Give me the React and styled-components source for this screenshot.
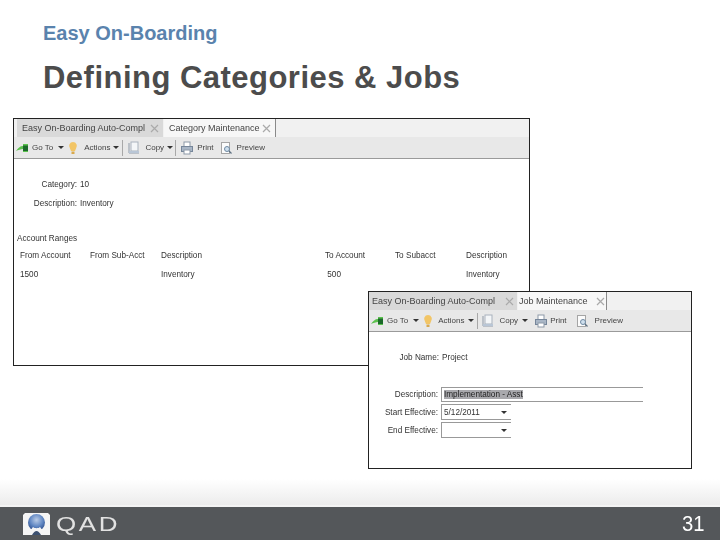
import React from 'react';
import styled, { createGlobalStyle, css } from 'styled-components';

const GlobalStyle = createGlobalStyle`
  html, body {
    margin: 0;
    padding: 0;
    background: #fff;
    font-family: "Liberation Sans", Arial, sans-serif;
  }
`;

const soft = css`
  filter: blur(0.3px);
`;

const Page = styled.div`
  width: 720px;
  height: 540px;
  display: flex;
  flex-direction: column;
  overflow: hidden;
`;

const Header = styled.header`
  padding: 21px 0 0 43px;
  height: 97px;
  box-sizing: border-box;
`;

const Kicker = styled.div`
  font-size: 20px;
  line-height: 24px;
  font-weight: 700;
  color: #5a83ad;
`;

const Title = styled.h1`
  margin: 15px 0 0;
  font-size: 31px;
  line-height: 36px;
  font-weight: 700;
  color: #4c4c4c;
  letter-spacing: 0.48px;
`;

const Desktop = styled.main`
  position: relative;
  flex: 1;
`;

const Window = styled.section`
  position: absolute;
  left: ${p => p.$x}px;
  top: ${p => p.$y}px;
  width: ${p => p.$w}px;
  height: ${p => p.$h}px;
  box-sizing: border-box;
  border: 1px solid #222;
  background: #fff;
  display: flex;
  flex-direction: column;
  font-size: 8.2px;
  color: #333;
`;

const TabBar = styled.div`
  height: 18px;
  flex: none;
  display: flex;
  background: #f1f1f1;
  padding-left: ${p => p.$inset}px;
  font-size: 9px;
  ${soft}
`;

const Tab = styled.div`
  width: ${p => p.$w}px;
  box-sizing: border-box;
  display: flex;
  align-items: center;
  justify-content: space-between;
  padding: 0 ${p => p.$padR}px 0 ${p => p.$pad}px;
  white-space: nowrap;
  overflow: hidden;
  background: ${p => (p.$active ? '#f7f7f7' : '#d9d9d9')};
  border-right: 1px solid ${p => (p.$active ? '#8a8a8a' : '#f1f1f1')};
  color: #444;
`;

const CloseMark = styled.svg`
  width: 9px;
  height: 9px;
  flex: none;
  stroke: #aaa;
  stroke-width: 1.2;
  fill: none;
`;

const Toolbar = styled.div`
  height: 22px;
  flex: none;
  box-sizing: border-box;
  display: flex;
  align-items: center;
  background: #e8e8e8;
  border-bottom: 1px solid #9a9a9a;
  padding-left: 2px;
  color: #444;
  font-size: 8px;
  ${soft}
`;

const ToolLabel = styled.span`
  margin-left: ${p => p.$gap}px;
  white-space: nowrap;
`;

const Caret = styled.span`
  width: 0;
  height: 0;
  margin-left: ${p => p.$gap}px;
  border-left: 3px solid transparent;
  border-right: 3px solid transparent;
  border-top: 3px solid #333;
`;

const ToolSep = styled.span`
  width: 1px;
  height: 16px;
  margin-left: ${p => p.$gap}px;
  background: #a8a8a8;
`;

const IconBox = styled.svg`
  width: 12px;
  height: 14px;
  flex: none;
  margin-left: ${p => p.$gap || 0}px;
`;

const Body = styled.div`
  flex: 1;
  display: flex;
  flex-direction: column;
  ${soft}
`;

const FieldRow = styled.div`
  display: flex;
  align-items: center;
  height: ${p => p.$h}px;
  margin-top: ${p => p.$top || 0}px;
`;

const FieldLabel = styled.span`
  width: ${p => p.$w}px;
  flex: none;
  text-align: right;
  white-space: nowrap;
`;

const FieldValue = styled.span`
  margin-left: 3px;
`;

const SectionLabel = styled.div`
  margin: 19px 0 0 3px;
  height: 14px;
  line-height: 14px;
`;

const RangeGrid = styled.div`
  display: grid;
  grid-template-columns: 70px 71px 164px 70px 71px 1fr;
  padding-left: 6px;
  grid-auto-rows: 19px;
  align-items: center;
`;

const TextInput = styled.div`
  width: ${p => p.$w}px;
  height: ${p => p.$h}px;
  box-sizing: border-box;
  margin-left: 3px;
  border: 1px solid #999;
  border-right: none;
  display: flex;
  align-items: center;
  justify-content: space-between;
  padding: 0 4px 0 2px;
  background: #fff;
`;

const Selected = styled.span`
  background: #a9a9ad;
  color: #222;
`;

const Footer = styled.footer`
  flex: none;
`;

const FooterFade = styled.div`
  height: 26px;
  background: linear-gradient(#fff, #ececec);
  border-bottom: 2px solid #f4f4f4;
`;

const FooterBar = styled.div`
  height: 33px;
  background: #54575a;
  display: flex;
  align-items: center;
  justify-content: space-between;
  padding: 0 16px 0 23px;
`;

const Brand = styled.div`
  display: flex;
  align-items: center;
  gap: 6px;
`;

const BrandName = styled.span`
  font-size: 20px;
  line-height: 24px;
  color: #e2e2e2;
  letter-spacing: 2px;
  transform: scaleX(1.3);
  transform-origin: left center;
`;

const PageNo = styled.span`
  font-size: 22px;
  color: #fff;
  transform: scaleX(0.92);
  transform-origin: right center;
`;

const Close = () => (
  <CloseMark viewBox="0 0 9 9">
    <path d="M1 1l7 7M8 1L1 8" />
  </CloseMark>
);

const GreenArrow = () => (
  <IconBox viewBox="0 0 12 14">
    <path d="M0 10c2-3 4-5 7-5V3h5v8H7V8C5 8 2 9 0 10z" fill="#5cc24e" />
    <rect x="7" y="4.500" width="5" height="5.500" fill="#1c6a2a" />
  </IconBox>
);

const Bulb = ({ gap }) => (
  <IconBox $gap={gap} viewBox="0 0 12 14">
    <path d="M6 1a4 4 0 0 1 3 6.500L8 10H4L3 7.500A4 4 0 0 1 6 1z" fill="#f2c566" />
    <rect x="4.500" y="10.500" width="3" height="2.500" fill="#d8a94e" />
  </IconBox>
);

const CopyIcon = ({ gap }) => (
  <IconBox $gap={gap} viewBox="0 0 12 14">
    <path d="M1 2v10h10" fill="none" stroke="#8f9aa8" />
    <rect x="3" y="1" width="7" height="9" fill="#f4f6f8" stroke="#a9b2bd" />
    <rect x="1" y="10" width="10" height="2" fill="#b9c6d6" />
  </IconBox>
);

const PrintIcon = ({ gap }) => (
  <IconBox $gap={gap} viewBox="0 0 12 14">
    <rect x="3" y="1" width="6" height="5" fill="#fff" stroke="#8d99a8" />
    <rect x="0.500" y="5.500" width="11" height="5" fill="#a9b6c6" stroke="#76869a" />
    <rect x="3" y="9" width="6" height="4" fill="#fff" stroke="#8d99a8" />
  </IconBox>
);

const PreviewIcon = ({ gap }) => (
  <IconBox $gap={gap} viewBox="0 0 12 14">
    <rect x="1.500" y="1.500" width="8" height="11" fill="#fbfbfb" stroke="#a5a5a5" />
    <circle cx="7" cy="8" r="2.500" fill="#cfe0ee" stroke="#6f8aa3" />
    <path d="M9 10l2.500 2.500" stroke="#5d6f80" strokeWidth="1.300" />
  </IconBox>
);

const Tools = ({ gaps, showSep }) => (
  <Toolbar>
    <GreenArrow />
    <ToolLabel $gap={4}>Go To</ToolLabel>
    <Caret $gap={5} />
    <Bulb gap={3} />
    <ToolLabel $gap={gaps.actions}>Actions</ToolLabel>
    <Caret $gap={gaps.caret} />
    <ToolSep $gap={3} />
    <CopyIcon gap={gaps.copyIcon} />
    <ToolLabel $gap={gaps.copy}>Copy</ToolLabel>
    <Caret $gap={gaps.caret} />
    {showSep && <ToolSep $gap={2} />}
    <PrintIcon gap={gaps.print} />
    <ToolLabel $gap={gaps.printLabel}>Print</ToolLabel>
    <PreviewIcon gap={gaps.preview} />
    <ToolLabel $gap={gaps.previewLabel}>Preview</ToolLabel>
  </Toolbar>
);

const CategoryWindow = () => (
  <Window $x={13} $y={21} $w={517} $h={248}>
    <TabBar $inset={3}>
      <Tab $w={147} $pad={5} $padR={4}>
        Easy On-Boarding Auto-Compl <Close />
      </Tab>
      <Tab $w={112} $pad={5} $padR={4} $active>
        Category Maintenance <Close />
      </Tab>
    </TabBar>
    <Tools
      showSep
      gaps={{ actions: 5, caret: 3, copyIcon: 5, copy: 5, print: 5, printLabel: 4, preview: 6, previewLabel: 5 }}
    />
    <Body>
      <FieldRow $h={19} $top={16}>
        <FieldLabel $w={63}>Category:</FieldLabel>
        <FieldValue>10</FieldValue>
      </FieldRow>
      <FieldRow $h={19}>
        <FieldLabel $w={63}>Description:</FieldLabel>
        <FieldValue>Inventory</FieldValue>
      </FieldRow>
      <SectionLabel>Account Ranges</SectionLabel>
      <RangeGrid>
        <span>From Account</span>
        <span>From Sub-Acct</span>
        <span>Description</span>
        <span>To Account</span>
        <span>To Subacct</span>
        <span>Description</span>
        <span>1500</span>
        <span />
        <span>Inventory</span>
        <span>&nbsp;500</span>
        <span />
        <span>Inventory</span>
      </RangeGrid>
    </Body>
  </Window>
);

const JobWindow = () => (
  <Window $x={368} $y={194} $w={324} $h={178}>
    <TabBar $inset={0}>
      <Tab $w={149} $pad={3} $padR={3}>
        Easy On-Boarding Auto-Compl <Close />
      </Tab>
      <Tab $w={89} $pad={1} $padR={1} $active>
        Job Maintenance <Close />
      </Tab>
    </TabBar>
    <Tools gaps={{ actions: 4, caret: 4, copyIcon: 4, copy: 5, print: 7, printLabel: 3, preview: 9, previewLabel: 7 }} />
    <Body>
      <FieldRow $h={14} $top={18}>
        <FieldLabel $w={70}>Job Name:</FieldLabel>
        <FieldValue>Project</FieldValue>
      </FieldRow>
      <FieldRow $h={15} $top={23}>
        <FieldLabel $w={69}>Description:</FieldLabel>
        <TextInput $w={202} $h={15}>
          <span>
            <Selected>Implementation - Asst</Selected>
          </span>
        </TextInput>
      </FieldRow>
      <FieldRow $h={16} $top={2}>
        <FieldLabel $w={69}>Start Effective:</FieldLabel>
        <TextInput $w={70} $h={16}>
          <span>5/12/2011</span>
          <Caret $gap={0} />
        </TextInput>
      </FieldRow>
      <FieldRow $h={16} $top={2}>
        <FieldLabel $w={69}>End Effective:</FieldLabel>
        <TextInput $w={70} $h={16}>
          <span />
          <Caret $gap={0} />
        </TextInput>
      </FieldRow>
    </Body>
  </Window>
);

const Logo = () => (
  <svg width="27" height="22" viewBox="0 0 27 22">
    <defs>
      <radialGradient id="orb" cx="0.5" cy="0.35" r="0.65">
        <stop offset="0" stopColor="#b9cbe6" />
        <stop offset="0.6" stopColor="#5f86c2" />
        <stop offset="1" stopColor="#2f4f8c" />
      </radialGradient>
    </defs>
    <path d="M2 0h23l2 2v20H0V2z" fill="#f5f5f5" />
    <circle cx="13.500" cy="9.500" r="8.500" fill="url(#orb)" />
    <path d="M1 22c4-2 7-5 9-8 1 .8 2 1.200 3.500 1.200s2.500-.4 3.500-1.200c2 3 5 6 9 8z" fill="#f5f5f5" />
    <path d="M9 22c1.500-2.500 3-4 4.500-4s3 1.500 4.500 4z" fill="#3d5170" />
  </svg>
);

export default function App() {
  return (
    <>
      <GlobalStyle />
      <Page>
        <Header>
          <Kicker>Easy On-Boarding</Kicker>
          <Title>Defining Categories &amp; Jobs</Title>
        </Header>
        <Desktop>
          <CategoryWindow />
          <JobWindow />
        </Desktop>
        <Footer>
          <FooterFade />
          <FooterBar>
            <Brand>
              <Logo />
              <BrandName>QAD</BrandName>
            </Brand>
            <PageNo>31</PageNo>
          </FooterBar>
        </Footer>
      </Page>
    </>
  );
}
